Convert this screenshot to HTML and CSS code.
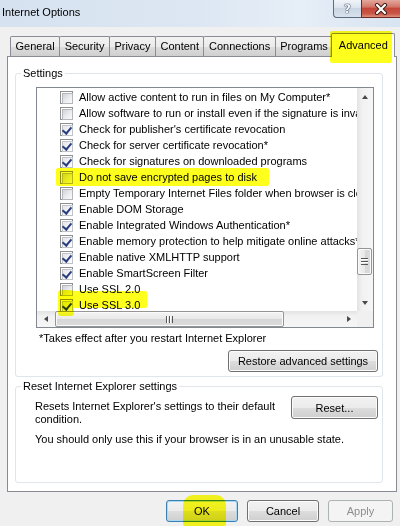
FILE: index.html
```html
<!DOCTYPE html>
<html>
<head>
<meta charset="utf-8">
<title>Internet Options</title>
<link rel="stylesheet" href="styles.css">
</head>
<body>
<div class="window">
  <div class="titlebar">
    <span class="title">Internet Options</span>
    <div class="caption-btns">
      <div class="cbtn help">?</div>
      <div class="cbtn close">
        <svg width="14" height="12" viewBox="0 0 14 12"><path d="M3 2 L11 10 M11 2 L3 10" stroke="#3b1a17" stroke-width="4" stroke-linecap="round"/><path d="M3 2 L11 10 M11 2 L3 10" stroke="#ffffff" stroke-width="2.2" stroke-linecap="round"/></svg>
      </div>
    </div>
  </div>
  <div class="client">
    <div class="tabs">
      <div class="tab">General</div>
      <div class="tab">Security</div>
      <div class="tab">Privacy</div>
      <div class="tab">Content</div>
      <div class="tab">Connections</div>
      <div class="tab">Programs</div>
      <div class="tab selected">Advanced</div>
    </div>
    <div class="page">
      <fieldset class="group group-settings">
        <legend>Settings</legend>
        <div class="listbox">
          <div class="items">
            <div class="item"><span class="cb"></span>Allow active content to run in files on My Computer*</div>
            <div class="item"><span class="cb"></span>Allow software to run or install even if the signature is invalid</div>
            <div class="item"><span class="cb checked"></span>Check for publisher's certificate revocation</div>
            <div class="item"><span class="cb checked"></span>Check for server certificate revocation*</div>
            <div class="item"><span class="cb checked"></span>Check for signatures on downloaded programs</div>
            <div class="item"><span class="cb"></span>Do not save encrypted pages to disk</div>
            <div class="item"><span class="cb"></span>Empty Temporary Internet Files folder when browser is closed</div>
            <div class="item"><span class="cb checked"></span>Enable DOM Storage</div>
            <div class="item"><span class="cb checked"></span>Enable Integrated Windows Authentication*</div>
            <div class="item"><span class="cb checked"></span>Enable memory protection to help mitigate online attacks*</div>
            <div class="item"><span class="cb checked"></span>Enable native XMLHTTP support</div>
            <div class="item"><span class="cb checked"></span>Enable SmartScreen Filter</div>
            <div class="item"><span class="cb"></span>Use SSL 2.0</div>
            <div class="item"><span class="cb checked"></span>Use SSL 3.0</div>
          </div>
          <div class="vscroll">
            <div class="sbtn"><span class="arr arr-up"></span></div>
            <div class="vtrack"><div class="vthumb"><span class="grip"></span></div></div>
            <div class="sbtn"><span class="arr arr-down"></span></div>
          </div>
          <div class="hscroll">
            <div class="sbtn"><span class="arr arr-left"></span></div>
            <div class="htrack"><div class="hthumb"><span class="grip"></span></div></div>
            <div class="sbtn"><span class="arr arr-right"></span></div>
          </div>
          <div class="corner"></div>
        </div>
        <div class="note">*Takes effect after you restart Internet Explorer</div>
        <div class="btn-row">
          <button class="btn btn-restore">Restore advanced settings</button>
        </div>
      </fieldset>
      <fieldset class="group group-reset">
        <legend>Reset Internet Explorer settings</legend>
        <div class="reset-row">
          <p class="reset-text">Resets Internet Explorer's settings to their default condition.</p>
          <button class="btn btn-reset">Reset...</button>
        </div>
        <p class="reset-warn">You should only use this if your browser is in an unusable state.</p>
      </fieldset>
    </div>
    <div class="dialog-btns">
      <button class="btn btn-dlg btn-default">OK</button>
      <button class="btn btn-dlg">Cancel</button>
      <button class="btn btn-dlg btn-apply" disabled>Apply</button>
    </div>
  </div>
  <div class="hl hl-tab"></div>
  <div class="hl hl-encrypt"></div>
  <div class="hl hl-ssl"></div>
  <div class="hl hl-ssl-box"></div>
  <div class="hl hl-ok"></div>
</div>
</body>
</html>
```

FILE: styles.css
```css
* { box-sizing: border-box; }
html, body { margin: 0; padding: 0; }
body {
  width: 400px;
  height: 526px;
  overflow: hidden;
  font-family: "Liberation Sans", Arial, sans-serif;
  font-size: 11px;
  color: #000;
  background: #dae5f2;
}
.window {
  position: relative;
  width: 400px;
  height: 526px;
  display: flex;
  flex-direction: column;
}

/* title bar */
.titlebar {
  height: 27px;
  flex: none;
  display: flex;
  justify-content: space-between;
  align-items: flex-start;
  background: linear-gradient(to right, #d6e2f0 0%, #dde7f3 50%, #e6eef7 75%, #d8e4f1 100%);
}
.title {
  padding: 5px 0 0 2px;
  line-height: 14px;
  font-size: 11px;
  color: #000;
}
.caption-btns { display: flex; }
.cbtn {
  height: 18px;
  display: flex;
  align-items: center;
  justify-content: center;
  border: 1px solid #5d6b7f;
  border-top: none;
}
.help {
  width: 28px;
  border-radius: 0 0 0 4px;
  border-right: none;
  background: linear-gradient(#f2f5f9 0%, #dce4ee 45%, #c9d5e3 50%, #d8e2ee 100%);
  font-family: "DejaVu Sans", sans-serif;
  font-weight: bold;
  font-size: 12px;
  color: #f4f6f9;
  text-shadow: 0 0 1px #2c3d55, 0 0 1px #2c3d55, 0 0 1px #2c3d55;
}
.close {
  width: 39px;
  border-right: none;
  border-color: #6b2a24;
  background: linear-gradient(#e4a79c 0%, #d27769 40%, #c4463a 50%, #c85646 80%, #e0907d 100%);
}

/* client */
.client {
  flex: 1;
  display: flex;
  flex-direction: column;
  background: #f0f0f0;
  padding: 9px 3px 0 7px;
}
.tabs {
  height: 20px;
  display: flex;
  align-items: flex-end;
  padding-left: 3px;
  position: relative;
  z-index: 1;
}
.tab {
  height: 20px;
  padding: 0 4.5px;
  line-height: 19px;
  border: 1px solid #898c95;
  border-bottom: none;
  margin-right: -1px;
  border-radius: 2px 2px 0 0;
  background: linear-gradient(#f2f2f2 0%, #ebebeb 50%, #dddddd 51%, #cfcfcf 100%);
  white-space: nowrap;
}
.tab.selected {
  height: 24px;
  margin: 0 -2px -1px -1px;
  padding: 0 6.5px;
  line-height: 22px;
  background: #fff;
}

.page {
  flex: none;
  height: 436px;
  background: #fff;
  border: 1px solid #898c95;
  padding: 9px 13px 0 7px;
}

/* group boxes */
.group {
  margin: 0;
  padding: 0;
  border: 1px solid #dfe5ea;
  border-radius: 3px;
  min-width: 0;
}
.group legend {
  padding: 0 2px;
  line-height: 14px;
  color: #000;
}
.group-settings {
  height: 311px;
  padding: 7px 4px 0 20px;
}
.group-settings legend { margin-left: -15px; }

/* listbox */
.listbox {
  width: 338px;
  height: 241px;
  border: 1px solid #828790;
  display: grid;
  grid-template-columns: 320px 16px;
  grid-template-rows: 223px 16px;
  background: #fff;
}
.items {
  overflow: hidden;
  padding-top: 1px;
}
.item {
  height: 16px;
  display: flex;
  align-items: center;
  padding-left: 23px;
  white-space: nowrap;
}
.cb {
  flex: none;
  width: 13px;
  height: 13px;
  margin-right: 6px;
  border: 1px solid #8e8f8f;
  background: #fff;
  padding: 1px;
  position: relative;
}
.cb::before {
  content: "";
  display: block;
  width: 9px;
  height: 9px;
  border: 1px solid #b4b7bb;
  background: linear-gradient(135deg, #d2d4d8 0%, #eceef0 60%, #fbfbfb 100%);
}
.cb.checked::before {
  border-color: #c0c4c9;
  background: linear-gradient(135deg, #e4e6e9 0%, #f4f5f6 60%, #fdfdfd 100%);
}
.cb.checked::after {
  content: "";
  position: absolute;
  left: 3px;
  top: 1px;
  width: 4px;
  height: 7px;
  border: solid #2b3f80;
  border-width: 0 2px 2px 0;
  transform: rotate(40deg);
  transform-origin: center;
}

/* scrollbars */
.vscroll {
  display: flex;
  flex-direction: column;
  background: linear-gradient(to right, #e2e2e2 0%, #f1f1f1 30%, #f6f6f6 100%);
}
.hscroll {
  display: flex;
  background: linear-gradient(#e2e2e2 0%, #f1f1f1 30%, #f6f6f6 100%);
}
.corner { background: #f0f0f0; }
.sbtn {
  flex: none;
  width: 16px;
  height: 17px;
  display: flex;
  align-items: center;
  justify-content: center;
}
.hscroll .sbtn { width: 17px; height: 16px; }
.vtrack { flex: 1; padding-top: 143px; }
.htrack { flex: 1; padding-left: 1px; }
.vthumb {
  width: 15px;
  height: 27px;
  border: 1px solid #959595;
  border-radius: 2px;
  background: linear-gradient(to right, #f4f4f4 0%, #e8e8e8 50%, #d6d6d6 51%, #dcdcdc 100%);
  box-shadow: inset 0 0 0 1px #fafafa;
  display: flex;
  align-items: center;
  justify-content: center;
}
.hthumb {
  width: 229px;
  height: 16px;
  border: 1px solid #959595;
  border-radius: 2px;
  background: linear-gradient(#f4f4f4 0%, #e8e8e8 50%, #d6d6d6 51%, #dcdcdc 100%);
  box-shadow: inset 0 0 0 1px #fafafa;
  display: flex;
  align-items: center;
  justify-content: center;
}
.vthumb .grip {
  width: 7px;
  height: 7px;
  background: repeating-linear-gradient(#555 0 1px, #fff 1px 2px, transparent 2px 3px);
}
.hthumb .grip {
  width: 7px;
  height: 7px;
  background: repeating-linear-gradient(to right, #555 0 1px, #fff 1px 2px, transparent 2px 3px);
}
.arr { width: 0; height: 0; border-style: solid; }
.arr-up { border-width: 0 3.5px 4px 3.5px; border-color: transparent transparent #4a4a4a transparent; }
.arr-down { border-width: 4px 3.5px 0 3.5px; border-color: #4a4a4a transparent transparent transparent; }
.arr-left { border-width: 3.5px 4px 3.5px 0; border-color: transparent #4a4a4a transparent transparent; }
.arr-right { border-width: 3.5px 0 3.5px 4px; border-color: transparent transparent transparent #4a4a4a; }

.note {
  margin-top: 3px;
  padding-left: 3px;
  line-height: 14px;
}
.btn-row {
  display: flex;
  justify-content: flex-end;
  margin-top: 5px;
}

/* buttons */
.btn {
  font-family: "Liberation Sans", Arial, sans-serif;
  font-size: 11px;
  color: #000;
  height: 22px;
  padding: 0 6px;
  border: 1px solid #707070;
  border-radius: 3px;
  background: linear-gradient(#f2f2f2 0%, #ebebeb 50%, #dddddd 51%, #cfcfcf 100%);
  box-shadow: inset 0 0 0 1px #fbfbfb;
  margin: 0;
}
.btn-restore { width: 150px; }
.btn-reset { width: 87px; height: 23px; flex: none; margin-top: 3px; }

.group-reset {
  margin-top: 2px;
  height: 104px;
  padding: 0 4px 0 19px;
}
.group-reset legend { margin-left: -14px; }
.reset-row {
  display: flex;
  justify-content: space-between;
  align-items: flex-start;
}
.reset-text {
  margin: 7px 0 0 0;
  width: 250px;
  line-height: 13px;
}
.reset-warn {
  margin: 7px 0 0 0;
  line-height: 13px;
}

.dialog-btns {
  display: flex;
  justify-content: flex-end;
  gap: 9px;
  margin-top: 8px;
  padding-right: 4px;
}
.btn-dlg { width: 72px; }
.btn-apply { width: 65px; }
.btn-default {
  border-color: #3c7fb1;
  box-shadow: inset 0 0 0 1px #a8d8f2;
}
.btn-apply {
  color: #8d8d8d;
  border-color: #adb2b5;
  background: #f4f4f4;
  box-shadow: none;
}

/* marker highlights (overlay) */
.hl {
  position: absolute;
  background: #ffff1e;
  mix-blend-mode: multiply;
  z-index: 5;
}
.hl-tab { left: 330px; top: 31px; width: 62px; height: 32px; border-radius: 2px; }
.hl-encrypt { left: 56px; top: 168px; width: 213px; height: 18px; border-radius: 2px; }
.hl-ssl { left: 59px; top: 291px; width: 88px; height: 17px; border-radius: 2px; }
.hl-ssl-box { left: 58px; top: 290px; width: 16px; height: 26px; border-radius: 3px; }
.hl-ok { left: 183px; top: 495px; width: 43px; height: 31px; border-radius: 10px 10px 2px 2px; }
```
